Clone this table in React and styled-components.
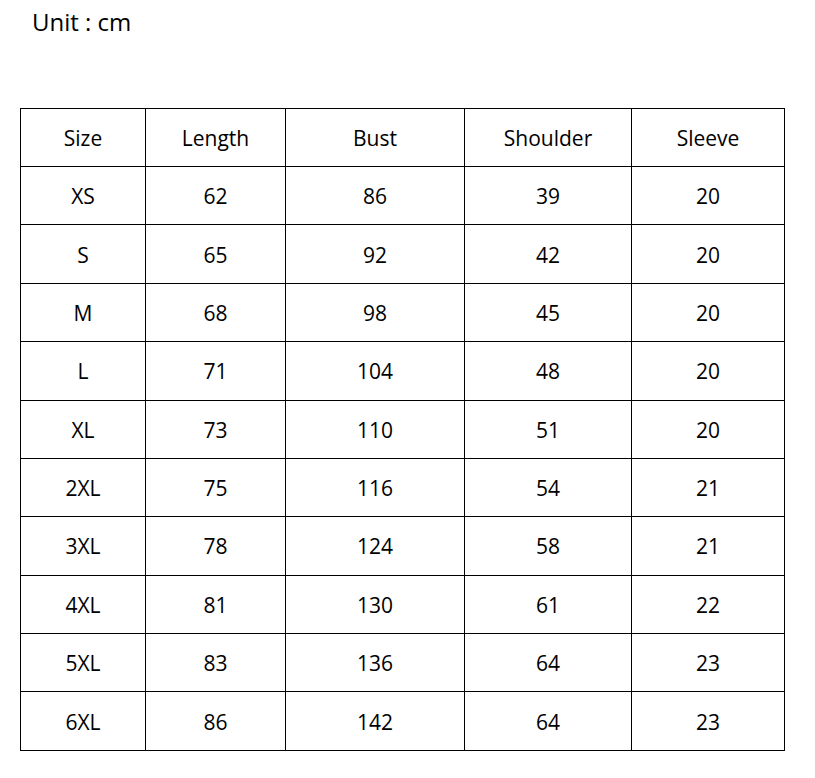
import React from 'react';
import styled, { createGlobalStyle } from 'styled-components';

const GlobalStyle = createGlobalStyle`
  body {
    margin: 0;
    background: #fff;
    font-family: 'Open Sans', 'Liberation Sans', sans-serif;
    color: #000;
  }
`;

const Page = styled.div`
  width: 815px;
  height: 778px;
  padding: 6px 0 0 20px;
  box-sizing: border-box;
`;

const Unit = styled.p`
  margin: 0 0 0 12px;
  font-size: 24px;
  line-height: 32.7px;
`;

const Table = styled.div`
  margin-top: 69px;
  display: grid;
  grid-template-columns: 124px 139px 178px 166px 152px;
  grid-template-rows: repeat(11, 1fr);
  gap: 1px;
  padding: 1px;
  width: 765px;
  height: 643px;
  box-sizing: border-box;
  background: #000;
`;

const Cell = styled.div`
  background: #fff;
  display: flex;
  align-items: center;
  justify-content: center;
  padding-top: 1px;
  box-sizing: border-box;
  font-size: 21px;
`;

const headers = ['Size', 'Length', 'Bust', 'Shoulder', 'Sleeve'];

const rows = [
  ['XS', 62, 86, 39, 20],
  ['S', 65, 92, 42, 20],
  ['M', 68, 98, 45, 20],
  ['L', 71, 104, 48, 20],
  ['XL', 73, 110, 51, 20],
  ['2XL', 75, 116, 54, 21],
  ['3XL', 78, 124, 58, 21],
  ['4XL', 81, 130, 61, 22],
  ['5XL', 83, 136, 64, 23],
  ['6XL', 86, 142, 64, 23],
];

export default function App() {
  return (
    <Page>
      <GlobalStyle />
      <Unit>Unit : cm</Unit>
      <Table>
        {headers.map((h) => (
          <Cell key={h}>{h}</Cell>
        ))}
        {rows.map((row) =>
          row.map((value, i) => <Cell key={row[0] + i}>{value}</Cell>)
        )}
      </Table>
    </Page>
  );
}
